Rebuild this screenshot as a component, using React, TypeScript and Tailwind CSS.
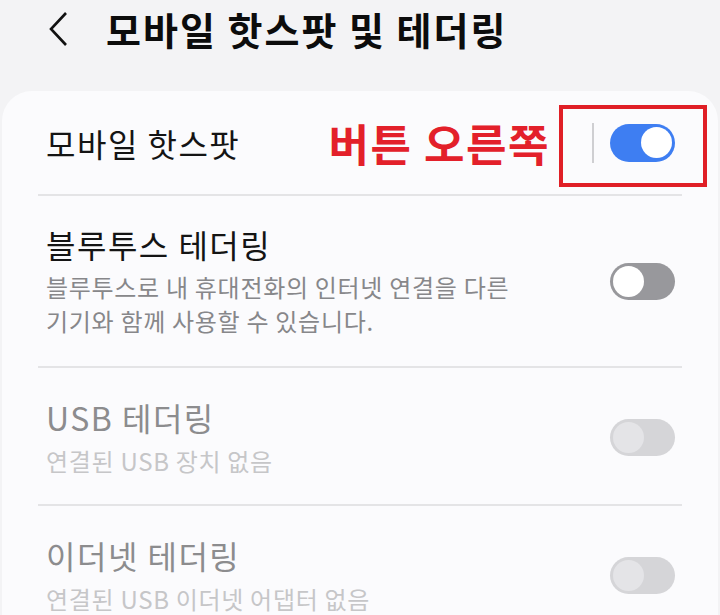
import React from "react";

type Row = {
  title: string;
  sub?: string[];
  state: "on" | "off" | "disabled";
};

const ROWS: Row[] = [
  {
    title: "블루투스 테더링",
    sub: ["블루투스로 내 휴대전화의 인터넷 연결을 다른", "기기와 함께 사용할 수 있습니다."],
    state: "off",
  },
  { title: "USB 테더링", sub: ["연결된 USB 장치 없음"], state: "disabled" },
  { title: "이더넷 테더링", sub: ["연결된 USB 이더넷 어댑터 없음"], state: "disabled" },
];

function Toggle({ state }: { state: "on" | "off" | "disabled" }) {
  if (state === "on") {
    return (
      <div className="flex h-[38px] w-[65px] items-center justify-end rounded-full bg-[#3e7ef2] pr-[3px]">
        <div className="h-[31px] w-[31px] rounded-full bg-white" />
      </div>
    );
  }
  if (state === "off") {
    return (
      <div className="flex h-[37px] w-[65px] items-center justify-start rounded-full bg-[#98989c] pl-[3px]">
        <div className="h-[31px] w-[31px] rounded-full bg-white" />
      </div>
    );
  }
  return (
    <div className="flex h-[37px] w-[65px] items-center justify-start rounded-full bg-[#d5d5d8] pl-[3px]">
      <div className="h-[31px] w-[31px] rounded-full bg-[#e4e4e7]" />
    </div>
  );
}

export default function App() {
  return (
    <div
      className="h-[615px] w-[720px] overflow-hidden bg-[#f3f3f5]"
      style={{ fontFamily: '"Noto Sans CJK KR", "Noto Sans", sans-serif' }}
    >
      {/* header */}
      <div className="flex h-[58px] items-center">
        <svg className="ml-[48px]" width="20" height="36" viewBox="0 0 20 36">
          <polyline
            points="18,2 3,18 18,34"
            fill="none"
            stroke="#111"
            strokeWidth="2.6"
            strokeLinejoin="miter"
          />
        </svg>
        <h1 className="ml-[38px] text-[38px] font-bold leading-[44px] tracking-[2px] text-[#0c0c0c]">
          모바일 핫스팟 및 테더링
        </h1>
      </div>

      {/* card */}
      <div className="mx-[2px] mt-[33px] h-[600px] rounded-t-[30px] bg-[#fbfbfd] px-[36px]">
        <div className="relative flex h-[105px] items-center border-b-2 border-[#e4e4e6] pl-2 pr-[7px]">
          <span className="text-[32px] leading-[40px] tracking-[1.5px] text-[#141414]">모바일 핫스팟</span>
          <span className="ml-auto mr-[42px] text-[44px] font-bold leading-[48px] tracking-[1.5px] text-[#e3202a]">
            버튼 오른쪽
          </span>
          <div className="h-[40px] w-[2px] bg-[#cfcfd2]" />
          <div className="ml-[16px]">
            <Toggle state="on" />
          </div>
          <div className="absolute left-[521px] top-[14px] h-[82px] w-[148px] border-4 border-[#e01f26]" />
        </div>

        {ROWS.map((row, i) => {
          const disabled = row.state === "disabled";
          return (
            <div
              key={row.title}
              className={
                "flex items-center border-b-2 border-[#e4e4e6] pl-2 pr-[7px] " +
                (i === 0 ? "pt-[28px] pb-[28px]" : "pt-[29px] pb-[27px]")
              }
            >
              <div className="flex-1">
                <div
                  className={
                    "text-[32px] leading-[40px] tracking-[1.5px] " +
                    (disabled ? "text-[#8c8c8e]" : "text-[#141414]")
                  }
                >
                  {row.title}
                </div>
                <div
                  className={
                    "text-[24px] tracking-[0.7px] " +
                    (disabled
                      ? "mt-[8px] leading-[32px] text-[#c6c6c8]"
                      : "mt-[6px] leading-[34px] text-[#87878a]")
                  }
                >
                  {row.sub?.map((s) => (
                    <div key={s}>{s}</div>
                  ))}
                </div>
              </div>
              <Toggle state={row.state} />
            </div>
          );
        })}
      </div>
    </div>
  );
}
